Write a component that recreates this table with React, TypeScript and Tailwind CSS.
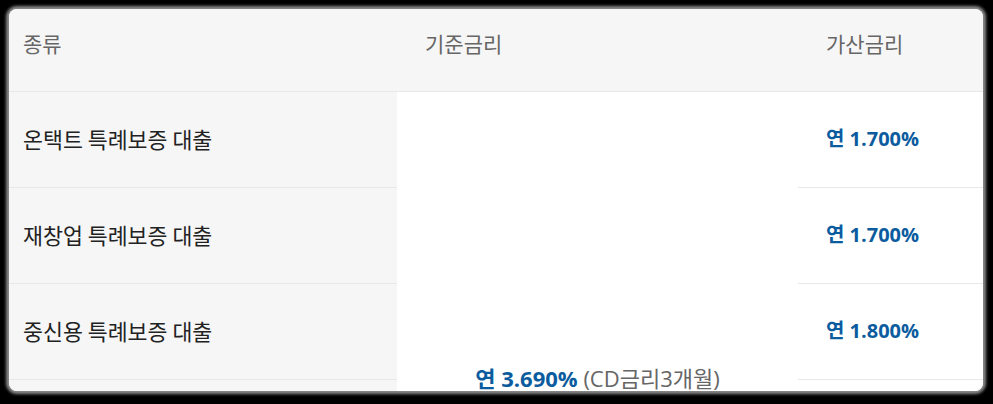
const rows = [
  "온택트 특례보증 대출",
  "재창업 특례보증 대출",
  "중신용 특례보증 대출",
  "",
  "",
  "",
];

const addRates = ["연 1.700%", "연 1.700%", "연 1.800%", "", "", ""];

const numFont = { fontFamily: '"Open Sans", "Noto Sans CJK KR", sans-serif' };

export default function App() {
  return (
    <div className="h-[404px] w-[993px] overflow-hidden bg-black p-[9px] pr-[10px]">
      <div
        className="h-[382px] w-[974px] overflow-hidden rounded-lg bg-white shadow-[0_0_3px_3px_rgba(170,170,170,0.8)]"
        style={{ fontFamily: '"Noto Sans CJK KR", "Noto Sans", sans-serif' }}
      >
        <table className="w-full table-fixed border-collapse">
          <colgroup>
            <col className="w-[388px]" />
            <col className="w-[401px]" />
            <col />
          </colgroup>
          <thead>
            <tr className="h-[82px] border-b border-[#e8e8e8] bg-[#f6f6f6] text-left text-[21px] font-normal text-[#666]">
              <th className="pb-[13px] pl-[14px] align-middle font-normal">종류</th>
              <th className="pb-[13px] pl-[28px] align-middle font-normal">기준금리</th>
              <th className="pb-[13px] pl-[28px] align-middle font-normal">가산금리</th>
            </tr>
          </thead>
          <tbody>
            {rows.map((label, i) => (
              <tr key={i} className="h-[96px]">
                <td className="border-b border-[#e8e8e8] bg-[#f6f6f6] pl-[14px] align-middle text-[21.7px] text-[#222]">
                  {label}
                </td>
                {i === 0 && (
                  <td rowSpan={6} className="bg-white pb-[2px] text-center align-middle text-[22px]" style={numFont}>
                    <span className="font-bold text-[#0b5c9e]">연 3.690%</span>{" "}
                    <span className="text-[#666]">(CD금리3개월)</span>
                  </td>
                )}
                <td
                  className="border-b border-[#e8e8e8] bg-white pl-[28px] align-middle text-[20px] font-bold text-[#0b5c9e]"
                  style={numFont}
                >
                  {addRates[i]}
                </td>
              </tr>
            ))}
          </tbody>
        </table>
      </div>
    </div>
  );
}
